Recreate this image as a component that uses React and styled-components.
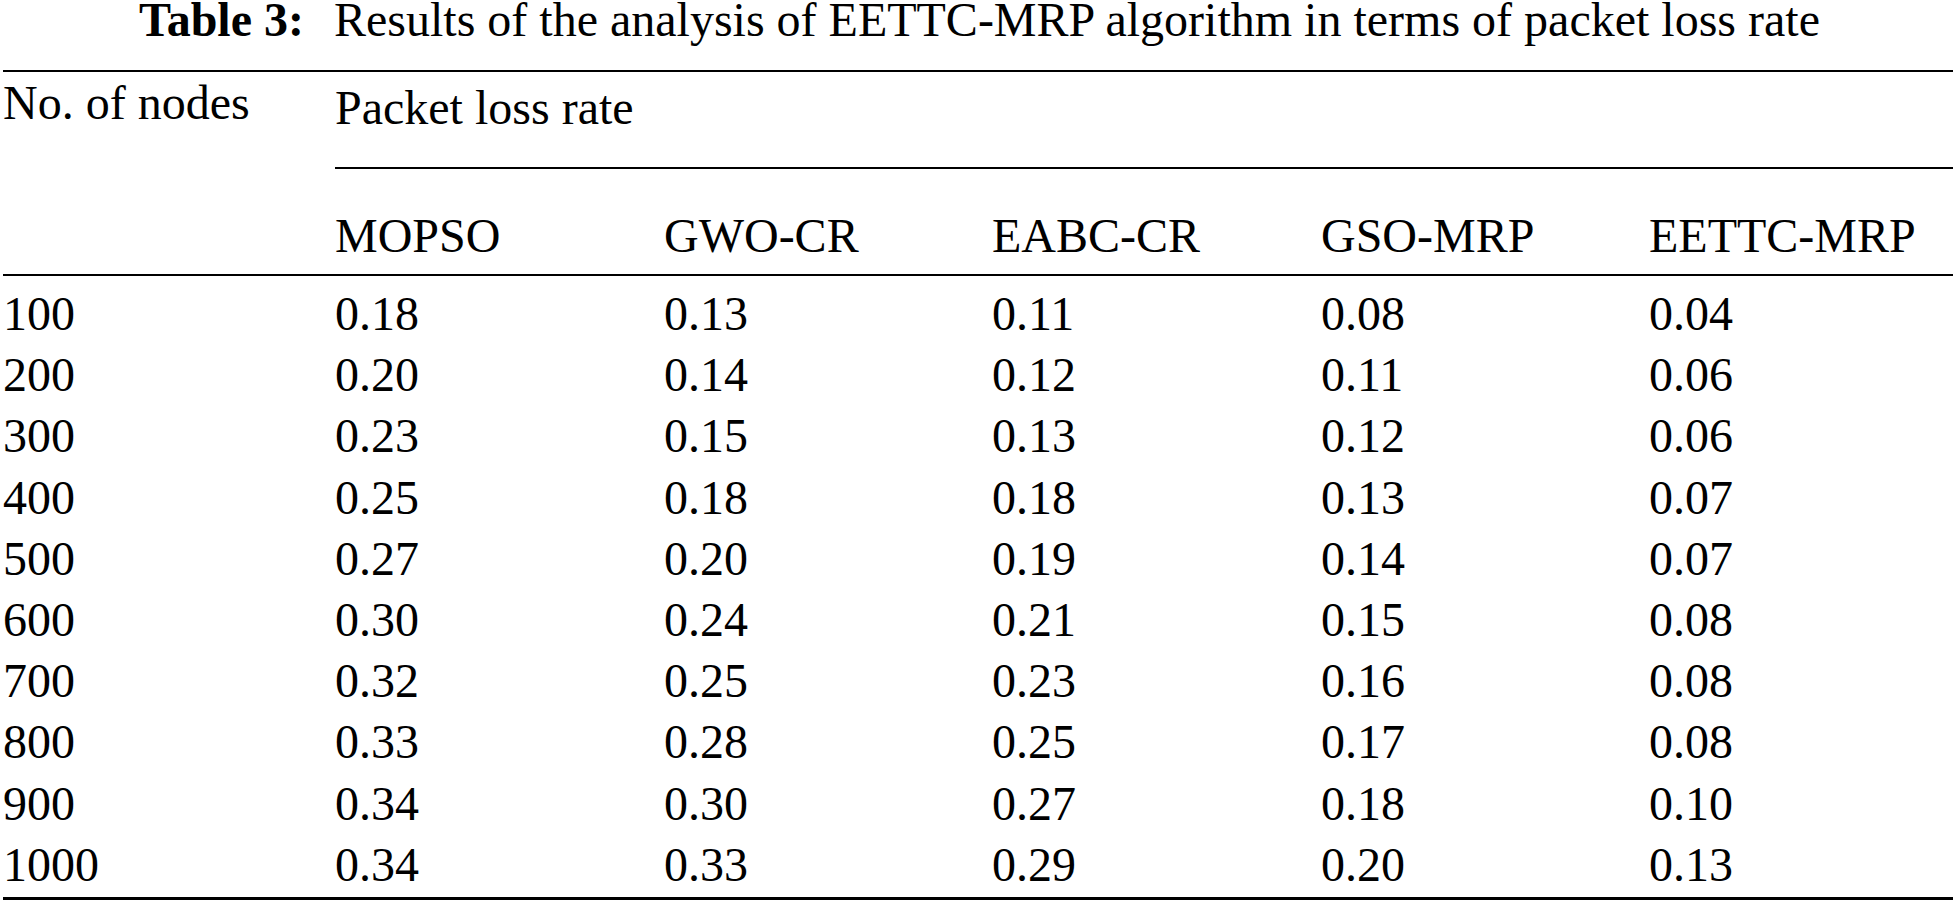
import React from 'react';
import styled, { createGlobalStyle } from 'styled-components';

const columns = ['MOPSO', 'GWO-CR', 'EABC-CR', 'GSO-MRP', 'EETTC-MRP'];

const rows = [
  ['100', '0.18', '0.13', '0.11', '0.08', '0.04'],
  ['200', '0.20', '0.14', '0.12', '0.11', '0.06'],
  ['300', '0.23', '0.15', '0.13', '0.12', '0.06'],
  ['400', '0.25', '0.18', '0.18', '0.13', '0.07'],
  ['500', '0.27', '0.20', '0.19', '0.14', '0.07'],
  ['600', '0.30', '0.24', '0.21', '0.15', '0.08'],
  ['700', '0.32', '0.25', '0.23', '0.16', '0.08'],
  ['800', '0.33', '0.28', '0.25', '0.17', '0.08'],
  ['900', '0.34', '0.30', '0.27', '0.18', '0.10'],
  ['1000', '0.34', '0.33', '0.29', '0.20', '0.13'],
];

export default function App() {
  return (
    <>
      <GlobalStyle />
      <Page>
        <Caption>
          <CaptionLabel>Table 3:</CaptionLabel>
          Results of the analysis of EETTC-MRP algorithm in terms of packet loss rate
        </Caption>
        <Table>
          <Header>
            <NodesLabel>No. of nodes</NodesLabel>
            <GroupLabel>Packet loss rate</GroupLabel>
            {columns.map((c) => (
              <ColumnLabel key={c}>{c}</ColumnLabel>
            ))}
          </Header>
          <Body>
            {rows.map((r) => (
              <Row key={r[0]}>
                {r.map((v, i) => (
                  <Cell key={i}>{v}</Cell>
                ))}
              </Row>
            ))}
          </Body>
        </Table>
      </Page>
    </>
  );
}

const GlobalStyle = createGlobalStyle`
  html, body {
    margin: 0;
    padding: 0;
    background: #ffffff;
  }
  body {
    font-family: "Liberation Serif", "Times New Roman", serif;
    color: #000;
  }
`;

const Page = styled.div`
  width: 1959px;
  height: 904px;
  overflow: hidden;
  background: #fff;
`;

const Caption = styled.div`
  font-size: 48px;
  line-height: 40px;
  text-align: center;
  white-space: nowrap;
  margin-bottom: 30px;
`;

const CaptionLabel = styled.span`
  font-weight: 700;
  margin-right: 30px;
`;

const gridCols = '332px 329px 328px 329px 328px 1fr';

const Table = styled.div`
  margin: 0 6px 0 3px;
  border-top: 2px solid #000;
  border-bottom: 3px solid #000;
  font-size: 48px;
`;

const Header = styled.div`
  display: grid;
  grid-template-columns: ${gridCols};
  border-bottom: 2px solid #000;
`;

const NodesLabel = styled.div`
  grid-row: 1 / 3;
  line-height: 48px;
  padding-top: 7px;
  white-space: nowrap;
`;

const GroupLabel = styled.div`
  grid-column: 2 / -1;
  line-height: 48px;
  height: 97px;
  box-sizing: border-box;
  padding-top: 12px;
  border-bottom: 2px solid #000;
`;

const ColumnLabel = styled.div`
  line-height: 48px;
  padding: 43px 0 14px;
  white-space: nowrap;
`;

const Body = styled.div`
  padding: 7px 0 2px;
`;

const Row = styled.div`
  display: grid;
  grid-template-columns: ${gridCols};
  height: 61.2px;
  line-height: 61px;
`;

const Cell = styled.div`
  white-space: nowrap;
`;
